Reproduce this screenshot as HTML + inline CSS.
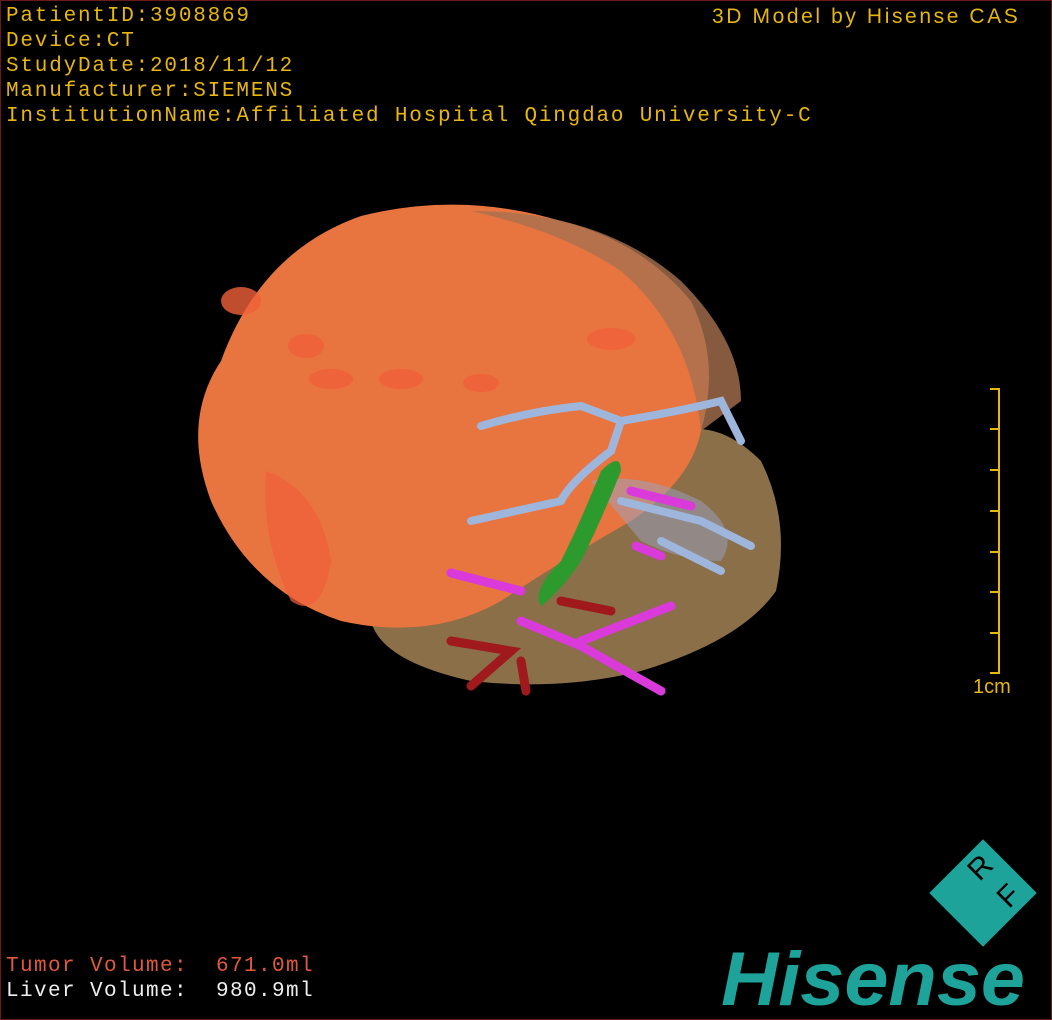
<!DOCTYPE html>
<html><head><style>
html,body{margin:0;padding:0;background:#000}
#w{position:relative;width:1050px;height:1018px;border:1px solid #6b1a1a;background:#000;overflow:hidden;font-family:"Liberation Mono","Noto Sans CJK SC",monospace}
.t{position:absolute;color:#e8b60c;font-size:21px;line-height:25px;white-space:pre;letter-spacing:1.8px}
</style></head><body><div id="w">
<div class="t" style="left:5px;top:3px">PatientID:3908869
Device:CT
StudyDate:2018/11/12
Manufacturer:SIEMENS
InstitutionName:Affiliated Hospital Qingdao University-C</div>
<div class="t" style="left:711px;top:3px;font-family:'Liberation Sans',sans-serif;letter-spacing:2.6px">3D Model by Hisense CAS</div>
<div class="t" style="left:5px;top:953px;color:#e05a3a;letter-spacing:1.4px">Tumor Volume:  671.0ml</div>
<div class="t" style="left:5px;top:978px;color:#eee;letter-spacing:1.4px">Liver Volume:  980.9ml</div>
<svg style="position:absolute;left:0;top:0" width="1050" height="1018">
<path d="M370 620 Q380 660 470 680 Q560 690 640 670 Q740 640 775 590 Q790 520 760 460 Q720 420 680 430 L560 560 Z" fill="#8a6f48"/>
<path d="M220 360 Q260 250 360 215 Q460 190 560 220 Q640 240 690 300 Q720 360 700 430 Q690 480 630 520 Q560 560 500 600 Q430 640 340 620 Q250 590 210 500 Q180 420 220 360 Z" fill="#e8743f"/>
<path d="M470 210 Q600 210 680 280 Q740 340 740 400 L700 430 Q690 330 620 270 Q560 230 470 210Z" fill="#a6714f" opacity=".8"/>
<g fill="#f0603a" opacity=".8">
<ellipse cx="305" cy="345" rx="18" ry="12"/><ellipse cx="400" cy="378" rx="22" ry="10"/><ellipse cx="480" cy="382" rx="18" ry="9"/><ellipse cx="610" cy="338" rx="24" ry="11"/><ellipse cx="240" cy="300" rx="20" ry="14"/><ellipse cx="330" cy="378" rx="22" ry="10"/>
</g>
<path d="M265 470 Q320 490 330 560 Q320 620 290 600 Q260 540 265 470Z" fill="#f2603a" opacity=".7"/>
<path d="M590 480 Q640 470 700 500 Q740 530 720 560 Q680 560 640 540Z" fill="#9aa3c4" opacity=".5"/>
<g fill="none" stroke="#9fb6dc" stroke-width="8" stroke-linecap="round">
<path d="M480 425 Q530 410 580 405 L620 420 L610 450 Q570 480 560 500 L470 520"/>
<path d="M620 420 Q680 410 720 400 L740 440"/>
<path d="M620 500 L700 520 L750 545"/><path d="M660 540 L720 570"/>
</g>
<path d="M600 470 Q620 450 620 470 Q600 520 580 560 Q560 590 540 605 Q530 590 560 560 Q580 520 600 470Z" fill="#2d9a2d"/>
<g fill="none" stroke="#d93ad9" stroke-width="9" stroke-linecap="round">
<path d="M520 620 L580 645 L660 690"/><path d="M580 640 L670 605"/><path d="M450 572 L520 590"/><path d="M630 490 L690 505"/><path d="M635 545 L660 555"/>
</g>
<g fill="none" stroke="#a0191c" stroke-width="9" stroke-linecap="round">
<path d="M450 640 L510 650 L470 685"/><path d="M560 600 L610 610"/><path d="M520 660 L525 690"/>
</g>
<g stroke="#e8b60c" stroke-width="2">
<path d="M998 387 V673"/>
<path d="M989 388H998M989 428H998M989 469H998M989 510H998M989 551H998M989 591H998M989 632H998M989 672H998"/>
</g>
<text x="972" y="692" fill="#e8b60c" font-family="Liberation Sans,sans-serif" font-size="20">1cm</text>
<g transform="translate(982 892) rotate(45)">
<rect x="-38" y="-38" width="76" height="76" fill="#1ea39a"/>
<text x="-20" y="-6" font-family="Liberation Sans,sans-serif" font-size="30" fill="#000" text-anchor="middle" transform="rotate(-90 -20 -16)">R</text>
<text x="20" y="-6" font-family="Liberation Sans,sans-serif" font-size="30" fill="#000" text-anchor="middle" transform="rotate(-90 20 -16)">F</text>
</g>
<text x="720" y="1004" fill="#1ea39a" font-family="Liberation Sans,sans-serif" font-weight="bold" font-style="italic" font-size="76" textLength="304" lengthAdjust="spacingAndGlyphs">Hisense</text>
</svg>
</div></body></html>
